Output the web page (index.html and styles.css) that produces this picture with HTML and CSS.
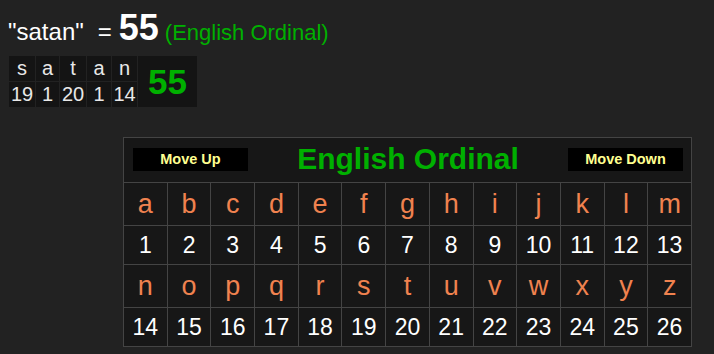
FILE: index.html
```html
<!DOCTYPE html>
<html>
<head>
  <meta charset="utf-8">
  <title>Gematria - satan</title>
  <link rel="stylesheet" href="styles.css">
</head>
<body>
  <div class="result">
    <span class="phrase">"satan"</span>
    <span class="equals">=</span>
    <span class="total">55</span>
    <span class="cipher-name">(English Ordinal)</span>
  </div>

  <!-- letter breakdown -->
  <table class="breakdown">
    <tr>
      <td class="w27">s</td><td class="w24">a</td><td class="w27">t</td><td class="w25">a</td><td class="w26">n</td>
      <td class="sum" rowspan="2">55</td>
    </tr>
    <tr>
      <td>19</td><td>1</td><td>20</td><td>1</td><td>14</td>
    </tr>
  </table>

  <!-- cipher chart -->
  <table class="chart">
    <tr>
      <td class="chart-head" colspan="13">
        <div class="head-row">
          <button class="move">Move Up</button>
          <span class="chart-title">English Ordinal</span>
          <button class="move">Move Down</button>
        </div>
      </td>
    </tr>
    <tr class="letters">
      <td>a</td><td>b</td><td>c</td><td>d</td><td>e</td><td>f</td><td>g</td><td>h</td><td>i</td><td>j</td><td>k</td><td>l</td><td>m</td>
    </tr>
    <tr class="values">
      <td>1</td><td>2</td><td>3</td><td>4</td><td>5</td><td>6</td><td>7</td><td>8</td><td>9</td><td>10</td><td>11</td><td>12</td><td>13</td>
    </tr>
    <tr class="letters">
      <td>n</td><td>o</td><td>p</td><td>q</td><td>r</td><td>s</td><td>t</td><td>u</td><td>v</td><td>w</td><td>x</td><td>y</td><td>z</td>
    </tr>
    <tr class="values">
      <td>14</td><td>15</td><td>16</td><td>17</td><td>18</td><td>19</td><td>20</td><td>21</td><td>22</td><td>23</td><td>24</td><td>25</td><td>26</td>
    </tr>
  </table>
</body>
</html>
```

FILE: styles.css
```css
* { box-sizing: border-box; }

body {
  margin: 0;
  padding: 8px;
  background: #222;
  color: #fff;
  font-family: "Liberation Sans", Arial, sans-serif;
}

.result {
  display: flex;
  align-items: baseline;
  height: 47px;
  padding-top: 5px;
  line-height: 30px;
}

.phrase {
  font-size: 24px;
}

.equals {
  font-size: 24px;
  margin: 0 7px 0 14px;
}

.total {
  font-size: 36px;
  font-weight: bold;
}

.cipher-name {
  font-size: 22px;
  color: #00b000;
  margin-left: 6px;
}

/* small breakdown table */
.breakdown {
  border-collapse: collapse;
  background: #141414;
  margin-bottom: 29px;
}

.breakdown td {
  border: 1px solid #222;
  height: 26px;
  padding: 0;
  text-align: center;
  font-size: 20px;
  color: #e8e8e8;
}

.breakdown .w27 { width: 27px; }
.breakdown .w24 { width: 24px; }
.breakdown .w25 { width: 25px; }
.breakdown .w26 { width: 26px; }

.breakdown .sum {
  width: 60px;
  color: #00b000;
  font-size: 35px;
  font-weight: bold;
}

/* cipher chart */
.chart {
  border-collapse: collapse;
  background: #171717;
  margin-left: 115px;
  width: 569px;
  table-layout: fixed;
}

.chart td {
  border: 1px solid #444;
  text-align: center;
  padding: 0;
}

.chart-head {
  height: 45px;
}

.head-row {
  display: flex;
  align-items: center;
  justify-content: space-between;
  padding: 0 8px 2px 9px;
}

.move {
  width: 115px;
  height: 23px;
  border: none;
  background: #000;
  color: #ffff90;
  font-family: "Liberation Sans", Arial, sans-serif;
  font-size: 14.5px;
  font-weight: bold;
  padding: 0;
}

.chart-title {
  color: #00b000;
  font-size: 30px;
  font-weight: bold;
}

.letters td {
  height: 43px;
  color: #f0824f;
  font-size: 27px;
}

.values td {
  height: 39px;
  color: #fff;
  font-size: 23px;
}
```
